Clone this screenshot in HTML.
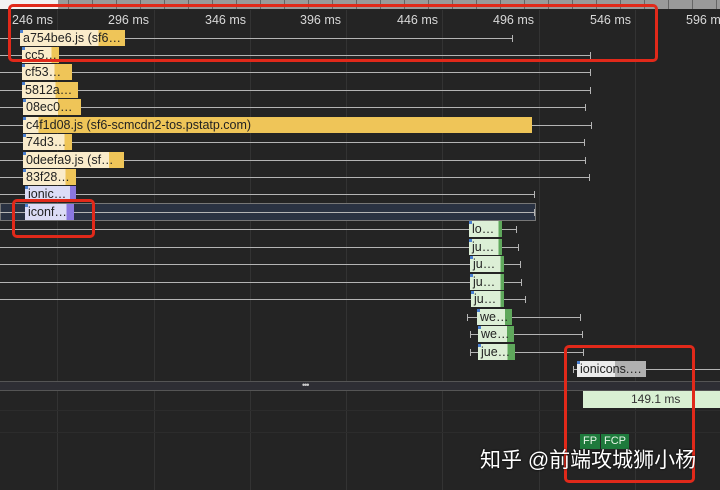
<!DOCTYPE html>
<html><head><meta charset="utf-8"><style>
html,body{margin:0;padding:0}
body{width:720px;height:490px;background:#242424;position:relative;overflow:hidden;font-family:"Liberation Sans","DejaVu Sans",sans-serif;}
.a{position:absolute}
.ruler{left:0;top:0;width:720px;height:9px;background:#9a9a9a}
.tick{top:0;width:1px;height:9px;background:#666}
.lab{top:13px;color:#d8d8d8;font-size:12.5px;white-space:nowrap}
.grid{top:10px;width:1px;height:480px;background:#333}
.line{height:1px;background:#b4b4b4}
.cap{width:1px;height:7px;background:#b4b4b4}
.bar{height:16px;font-size:12.5px;line-height:16px;color:#222;padding-left:3px;box-sizing:border-box;white-space:nowrap;overflow:hidden}
.y{background:linear-gradient(90deg,#faeccb var(--s),#efc558 var(--s))}
.p{background:linear-gradient(90deg,#dcdcf6 var(--s),#8b78e0 var(--s))}
.g{background:linear-gradient(90deg,#dcefd6 var(--s),#5fa85c var(--s))}
.gr{background:linear-gradient(90deg,#ececec var(--s),#b0b0b0 var(--s))}
.red{border:3px solid #e1291a;border-radius:5px;box-sizing:border-box}
</style></head><body>
<div class="a ruler"></div>
<div id="ticks"></div>
<div class="a grid" style="left:57px"></div>
<div class="a grid" style="left:154px"></div>
<div class="a grid" style="left:250px"></div>
<div class="a grid" style="left:346px"></div>
<div class="a grid" style="left:442px"></div>
<div class="a grid" style="left:539px"></div>
<div class="a grid" style="left:635px"></div>
<div class="a lab" style="left:12px">246 ms</div>
<div class="a lab" style="left:108px">296 ms</div>
<div class="a lab" style="left:205px">346 ms</div>
<div class="a lab" style="left:300px">396 ms</div>
<div class="a lab" style="left:397px">446 ms</div>
<div class="a lab" style="left:493px">496 ms</div>
<div class="a lab" style="left:590px">546 ms</div>
<div class="a lab" style="left:686px">596 ms</div>
<div class="a" style="left:0;top:203px;width:536px;height:18px;background:#2a3242;border:1px solid #777;box-sizing:border-box"></div>
<div id="rows"></div>
<div class="a" style="left:0;top:381px;width:720px;height:8px;background:#2e2e34;border-top:1px solid #555;border-bottom:1px solid #555"></div>
<div class="a" style="left:302px;top:380px;color:#ccc;font-size:9px;letter-spacing:-1px">•••</div>
<div class="a" style="left:0;top:410px;width:720px;height:1px;background:#2c2c2c"></div>
<div class="a" style="left:0;top:432px;width:720px;height:1px;background:#2c2c2c"></div>
<div class="a" style="left:583px;top:391px;width:137px;height:17px;background:#d9f0d3;color:#333;font-size:12px;line-height:17px;padding-left:48px;box-sizing:border-box">149.1 ms</div>
<div class="a" style="left:580px;top:434px;width:20px;height:15px;background:#1e7a3c;color:#e8f5e8;font-size:11px;line-height:15px;text-align:center">FP</div>
<div class="a" style="left:601px;top:434px;width:28px;height:15px;background:#1e7a3c;color:#e8f5e8;font-size:11px;line-height:15px;text-align:center">FCP</div>
<div class="a red" style="left:8px;top:4px;width:650px;height:58px"></div>
<div class="a red" style="left:12px;top:199px;width:83px;height:39px"></div>
<div class="a red" style="left:564px;top:345px;width:131px;height:138px"></div>
<div class="a" style="left:480px;top:444px;color:#fff;font-size:21px;font-family:'Liberation Sans','Noto Sans CJK SC',sans-serif;text-shadow:0 0 2px #000;white-space:nowrap">知乎 @前端攻城狮小杨</div>
<script>
var t='';for(var x=20;x<720;x+=24)t+='<div class="a tick" style="left:'+x+'px"></div>';
t+='<div class="a" style="left:0;top:0;width:58px;height:9px;background:#f2f2f2"></div>';
document.getElementById('ticks').innerHTML=t;
var R=[
[30,20,125,0.75,'y','a754be6.js (sf6…',512,0],
[47,22,59,0.8,'y','cc5…',590,0],
[64,22,72,0.65,'y','cf53…',590,0],
[82,22,78,0.6,'y','5812a…',590,0],
[99,23,81,0.6,'y','08ec0…',585,0],
[117,23,532,0.03,'y','c4f1d08.js (sf6-scmcdn2-tos.pstatp.com)',591,0],
[134,23,72,0.85,'y','74d3…',584,0],
[152,23,124,0.85,'y','0deefa9.js (sf…',585,0],
[169,23,76,0.8,'y','83f28…',589,0],
[186,25,76,0.88,'p','ionic…',534,0],
[204,25,74,0.85,'p','iconf…',534,0],
[221,469,502,0.9,'g','lo…',516,0],
[239,469,502,0.9,'g','ju…',518,0],
[256,470,504,0.9,'g','ju…',520,0],
[274,470,504,0.9,'g','ju…',521,0],
[291,471,504,0.9,'g','ju…',525,0],
[309,477,512,0.8,'g','we…',580,467],
[326,478,514,0.8,'g','we…',582,470],
[344,478,515,0.8,'g','jue…',583,470],
[361,577,646,0.55,'gr','ionicons.…',720,573]];
var h='';
R.forEach(function(r){var y=r[0],cy=y+8;
var st=r[7];h+='<div class="a line" style="left:'+st+'px;top:'+cy+'px;width:'+(r[6]-st)+'px"></div>';
h+='<div class="a cap" style="left:'+r[6]+'px;top:'+(cy-3)+'px"></div>';
if(st)h+='<div class="a cap" style="left:'+st+'px;top:'+(cy-3)+'px"></div>';
h+='<div class="a bar '+r[4]+'" style="--s:'+(r[3]*100)+'%;left:'+r[1]+'px;top:'+y+'px;width:'+(r[2]-r[1])+'px">'+r[5]+'</div>';
h+='<div class="a" style="left:'+r[1]+'px;top:'+y+'px;width:3px;height:3px;background:#4a7fd0"></div>';});
document.getElementById('rows').innerHTML=h;
</script>
</body></html>
